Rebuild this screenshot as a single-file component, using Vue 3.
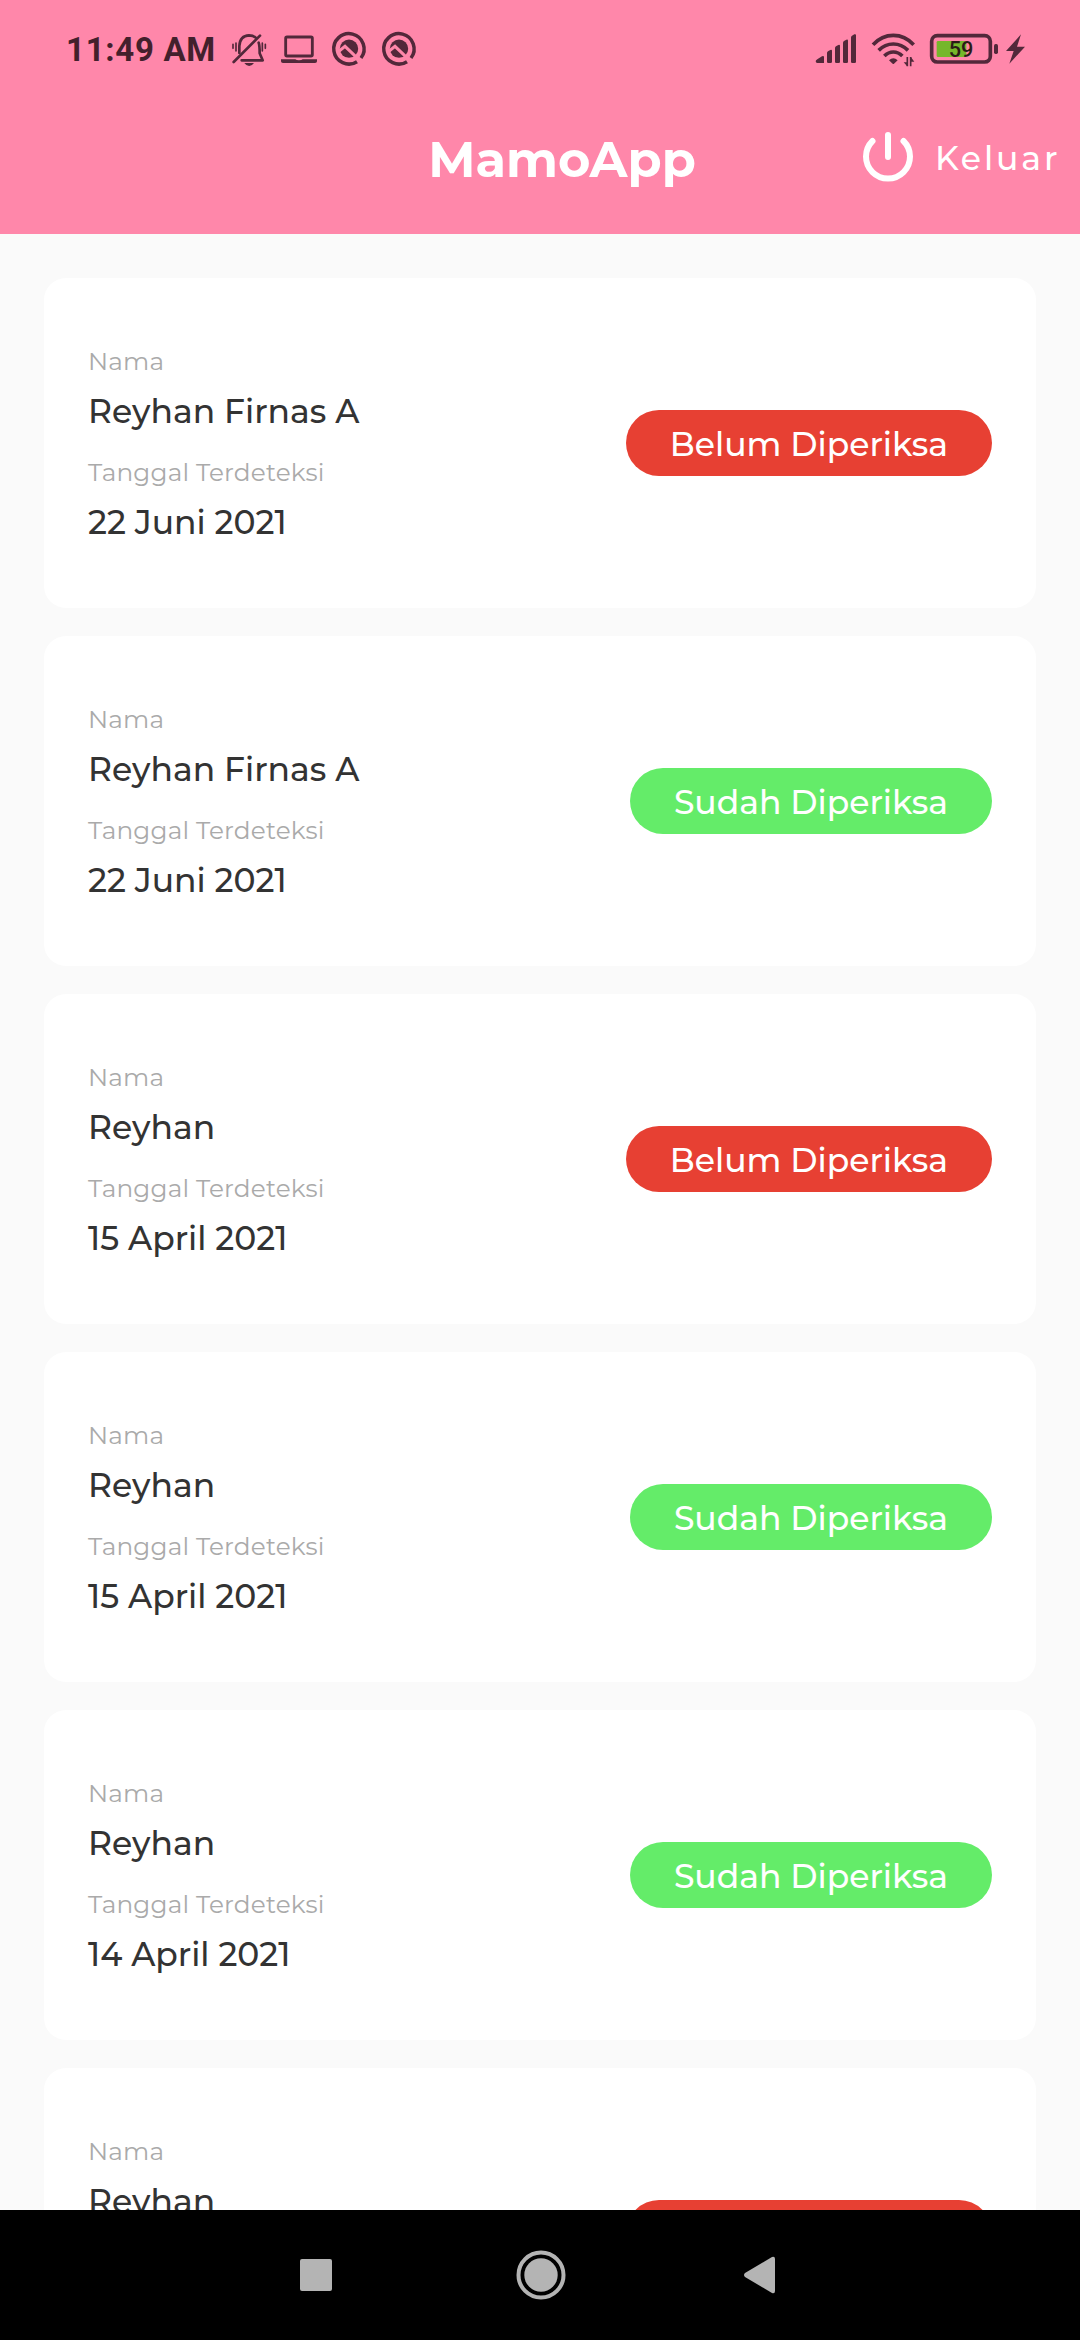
<script setup>
const patients = [
  { name: 'Reyhan Firnas A', date: '22 Juni 2021', checked: false },
  { name: 'Reyhan Firnas A', date: '22 Juni 2021', checked: true },
  { name: 'Reyhan', date: '15 April 2021', checked: false },
  { name: 'Reyhan', date: '15 April 2021', checked: true },
  { name: 'Reyhan', date: '14 April 2021', checked: true },
  { name: 'Reyhan', date: '14 April 2021', checked: false },
]
</script>

<template>
  <div class="screen">
    <header class="top">
      <div class="status">
        <span class="clock">11:49 AM</span>
        <svg class="bell" viewBox="540 30 114 114" width="38" height="38" fill="none" stroke="currentColor" stroke-linecap="round">
          <path d="M568 99V78Q570 47 597 46Q610 46 617 53M626 68Q629 75 629 100L638 121H575" stroke-width="8" stroke-linejoin="round" />
          <path d="M630 47L551 126" stroke-width="8" />
          <path d="M549 73V85M558 69V93M637 69V93M646 73V85" stroke-width="5" />
          <path d="M583 129H612Q606 138 597.500 138Q589 138 583 129Z" fill="currentColor" stroke="none" />
        </svg>
        <svg class="laptop" viewBox="690 30 114 114" width="38" height="38" fill="none" stroke="currentColor">
          <rect x="707" y="51" width="80" height="57" rx="4" stroke-width="8.500" />
          <path d="M693 118H736Q739 121 747 121Q755 121 758 118H801V124Q801 129 795 129H699Q693 129 693 124Z" fill="currentColor" stroke="none" />
        </svg>
        <svg v-for="n in 2" :key="n" class="app" viewBox="840 30 114 114" width="38" height="38" fill="none" stroke="currentColor">
          <path d="M933 114A45.500 45.500 0 1 0 921 125" stroke-width="10.500" />
          <circle cx="897" cy="86" r="27.500" fill="currentColor" stroke="none" />
          <path class="cut" d="M864 96L885 79L930 122" stroke-width="9" />
        </svg>
        <span class="spring"></span>
        <svg class="signal" viewBox="42 30 126 114" width="42" height="38" fill="currentColor">
          <path d="M44 123Q45 120 50 117L63 109Q69 106 69 112V129H49Q44 129 44 123Z" />
          <path d="M78 99Q78 96 81 94L88 90Q93 88 93 93V125Q93 129 89 129H82Q78 129 78 125Z" />
          <path d="M102 84Q102 81 105 79L112 75Q117 73 117 78V125Q117 129 113 129H106Q102 129 102 125Z" />
          <path d="M126 68Q126 65 129 63L136 59Q141 57 141 62V125Q141 129 137 129H130Q126 129 126 125Z" />
          <path d="M150 52Q150 49 153 47L160 43Q165 41 165 46V125Q165 129 161 129H154Q150 129 150 125Z" />
        </svg>
        <svg class="wifi" viewBox="210 30 135 114" width="45" height="38" fill="none" stroke="currentColor">
          <path d="M216 74Q242 46 277 46Q312 46 338 74M233 91Q252 72 277 72Q302 72 321 91M250 108Q262 96 277 96Q292 96 304 108" stroke-width="11" />
          <path d="M264 121Q277 109 290 121L279 131Q277 133 275 131Z" fill="currentColor" stroke="none" />
          <path d="M319 111V139M329 139V111" stroke-width="5" />
          <path d="M308 127H318V138ZM330 112L340 125H330Z" fill="currentColor" stroke="none" />
        </svg>
        <svg class="battery" viewBox="384 30 210 114" width="70" height="38">
          <rect x="392" y="47" width="176" height="79" rx="17" fill="none" stroke="currentColor" stroke-width="11" />
          <rect x="407" y="63" width="89" height="48" rx="4" fill="#75b72b" />
          <rect x="579" y="72" width="12" height="30" rx="5" fill="currentColor" />
          <text x="443" y="110" textLength="74" lengthAdjust="spacingAndGlyphs">59</text>
        </svg>
        <svg class="bolt" viewBox="609 30 66 114" width="22" height="38" fill="currentColor">
          <path d="M660 43L615 93H638L625 131L672 80H648Z" />
        </svg>
      </div>
      <div class="appbar">
        <h1 class="title">MamoApp</h1>
        <button class="logout">
          <svg width="52" height="52" fill="none" stroke="currentColor" stroke-width="6" stroke-linecap="round">
            <path d="M26 4V26M10.500 10A22 22 0 1 0 41.500 10" />
          </svg>
          <span class="logout-label">Keluar</span>
        </button>
      </div>
    </header>

    <main class="list">
      <article v-for="(p, i) in patients" :key="i" class="card">
        <div class="info">
          <div class="label">Nama</div>
          <div class="value">{{ p.name }}</div>
          <div class="label second">Tanggal Terdeteksi</div>
          <div class="value">{{ p.date }}</div>
        </div>
        <div class="badge" :class="{ done: p.checked }">{{ p.checked ? 'Sudah Diperiksa' : 'Belum Diperiksa' }}</div>
      </article>
    </main>

    <nav class="nav">
      <svg width="32" height="32" fill="currentColor"><rect width="32" height="32" rx="2" /></svg>
      <svg class="home" width="50" height="50" fill="none" stroke="currentColor"><circle cx="25" cy="25" r="22.500" stroke-width="4" /><circle cx="25" cy="25" r="16.700" fill="currentColor" stroke="none" /></svg>
      <svg width="32" height="38" fill="currentColor"><path d="M1 17L28 1Q31 0 31 3V35Q31 38 28 37L1 21Q-1 19 1 17Z" /></svg>
    </nav>
  </div>
</template>

<style scoped>
.screen {
  width: 1080px;
  height: 2340px;
  display: flex;
  flex-direction: column;
  overflow: hidden;
  background: #fafafa;
  font-family: Montserrat, Inter, sans-serif;
  white-space: nowrap;
}
svg {
  display: block;
  flex: none;
  overflow: visible;
}
.top {
  flex: none;
  height: 234px;
  background: #ff87aa;
}
.status {
  display: flex;
  height: 68px;
  padding: 30px 54px 0 66px;
  box-sizing: border-box;
  color: #52283a;
}
.clock {
  width: 150px;
  font: 700 33px/40px Roboto, sans-serif;
  letter-spacing: 0.7px;
  color: #43202c;
}
.bell { margin-left: 14px; }
.laptop { margin-left: 12px; }
.app { margin-left: 12px; }
.cut { stroke: #ff87aa; }
.spring { flex: 1; }
.wifi { margin-left: 14px; }
.battery { margin-left: 13px; }
.battery text {
  font: 500 66px Roboto, sans-serif;
  fill: #2b1a16;
}
.bolt { margin-left: 5px; }
.appbar {
  display: grid;
  grid-template-columns: 1fr auto 1fr;
  align-items: start;
  padding: 63px 20px 0 62px;
  color: #fff;
}
.title {
  grid-column: 2;
  margin: -2px 0 0 2px;
  font-size: 49.500px;
  line-height: 60px;
  font-weight: 700;
}
.logout {
  justify-self: end;
  display: flex;
  gap: 21px;
  padding: 0;
  border: 0;
  background: none;
  color: inherit;
  font: inherit;
}
.logout-label {
  width: 125px;
  text-align: left;
  font-size: 33px;
  line-height: 54px;
  font-weight: 500;
  letter-spacing: 2.900px;
}
.list {
  flex: 1;
  min-height: 0;
  display: flex;
  flex-direction: column;
  gap: 28px;
  padding: 44px 44px 0;
  overflow: hidden;
}
.card {
  flex: none;
  height: 330px;
  box-sizing: border-box;
  display: flex;
  justify-content: space-between;
  align-items: center;
  padding: 0 44px;
  border-radius: 22px;
  background: #fff;
}
.info {
  align-self: flex-start;
  padding-top: 68px;
}
.label {
  font-size: 24.750px;
  line-height: 30px;
  letter-spacing: 0.180px;
  color: #aaa;
}
.label.second { margin-top: 26px; }
.value {
  margin-top: 15px;
  font-size: 33px;
  line-height: 40px;
  font-weight: 500;
  color: #333;
}
.badge {
  padding: 0 44px;
  height: 66px;
  line-height: 68px;
  border-radius: 33px;
  background: #e74033;
  color: #fff;
  font-size: 33px;
  font-weight: 500;
}
.badge.done { background: #64ec69; }
.nav {
  flex: none;
  height: 130px;
  box-sizing: border-box;
  padding: 0 304px 0 300px;
  display: flex;
  align-items: center;
  justify-content: space-between;
  background: #000;
  color: #b4b4b4;
}
.home { margin-left: 5px; }
</style>

<style>
body {
  background: #fafafa;
}
</style>
